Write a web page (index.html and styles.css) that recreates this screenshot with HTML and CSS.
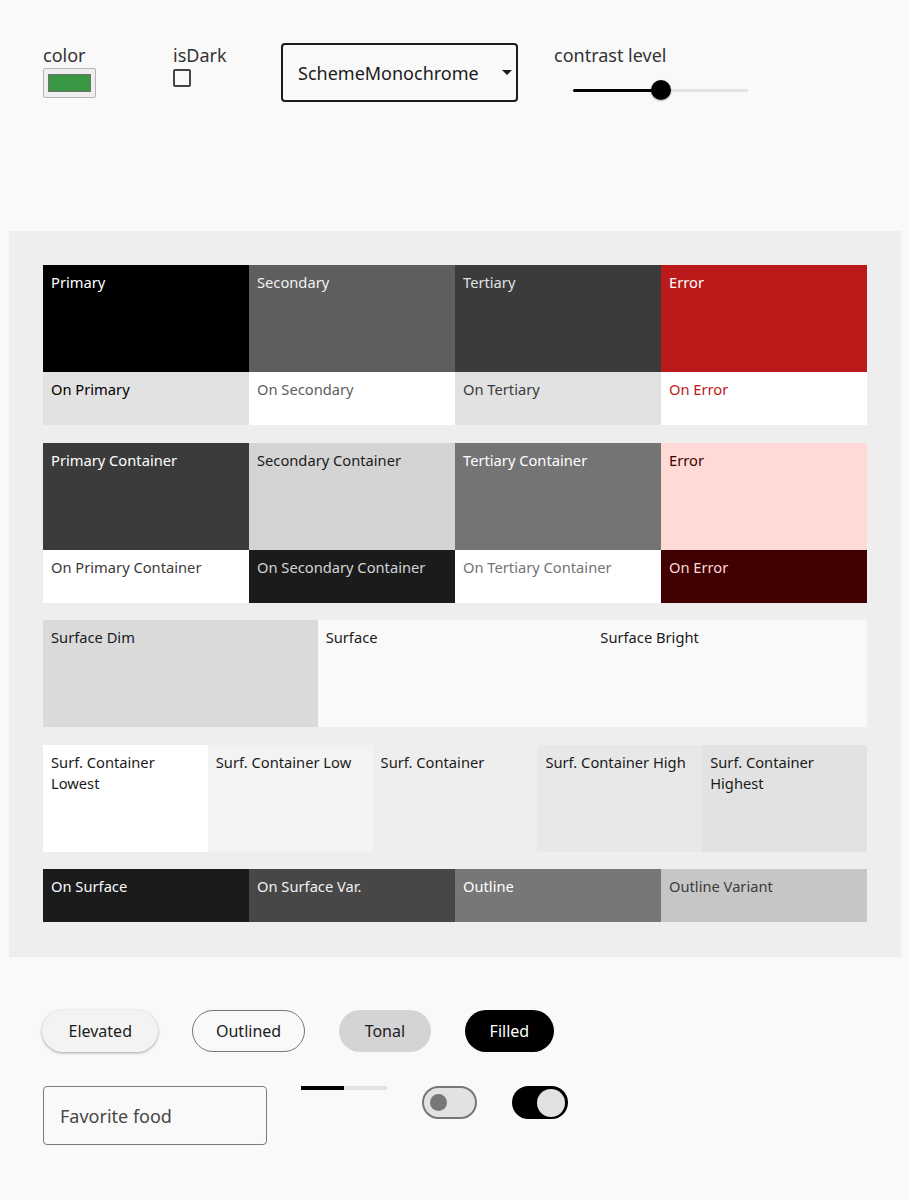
FILE: index.html
```html
<!DOCTYPE html>
<html lang="en">
<head>
    <meta charset="UTF-8">
    <meta name="viewport" content="width=device-width, initial-scale=1.0">
    <title>Scheme Preview</title>
    <link rel="stylesheet" href="styles.css">
</head>
<body>
    <header class="controls">
        <div class="field field-color">
            <label>color</label>
            <span class="color-input"><span class="color-fill"></span></span>
        </div>
        <div class="field field-dark">
            <label for="is-dark">isDark</label>
            <input type="checkbox" id="is-dark" class="check">
        </div>
        <div class="select-wrap">
            <select class="scheme-select">
                <option>SchemeMonochrome</option>
                <option>SchemeTonalSpot</option>
                <option>SchemeVibrant</option>
            </select>
        </div>
        <div class="field field-contrast">
            <label>contrast level</label>
            <div class="range">
                <div class="range-fill" style="width: 50%"></div>
                <span class="range-thumb" style="left: 50%"></span>
            </div>
        </div>
    </header>

    <main class="scheme-panel">
        <div class="group group-4">
            <div class="cell bg-primary">Primary</div>
            <div class="cell bg-secondary">Secondary</div>
            <div class="cell bg-tertiary">Tertiary</div>
            <div class="cell bg-error">Error</div>
            <div class="cell bg-on-primary">On Primary</div>
            <div class="cell bg-on-secondary">On Secondary</div>
            <div class="cell bg-on-tertiary">On Tertiary</div>
            <div class="cell bg-on-error">On Error</div>
        </div>

        <div class="group group-4">
            <div class="cell bg-primary-container">Primary Container</div>
            <div class="cell bg-secondary-container">Secondary Container</div>
            <div class="cell bg-tertiary-container">Tertiary Container</div>
            <div class="cell bg-error-container">Error</div>
            <div class="cell bg-on-primary-container">On Primary Container</div>
            <div class="cell bg-on-secondary-container">On Secondary Container</div>
            <div class="cell bg-on-tertiary-container">On Tertiary Container</div>
            <div class="cell bg-on-error-container">On Error</div>
        </div>

        <div class="group group-3">
            <div class="cell bg-surface-dim">Surface Dim</div>
            <div class="cell bg-surface">Surface</div>
            <div class="cell bg-surface-bright">Surface Bright</div>
        </div>

        <div class="group group-5">
            <div class="cell bg-sc-lowest">Surf. Container Lowest</div>
            <div class="cell bg-sc-low">Surf. Container Low</div>
            <div class="cell bg-sc">Surf. Container</div>
            <div class="cell bg-sc-high">Surf. Container High</div>
            <div class="cell bg-sc-highest">Surf. Container Highest</div>
        </div>

        <div class="group group-short">
            <div class="cell bg-on-surface">On Surface</div>
            <div class="cell bg-on-surface-var">On Surface Var.</div>
            <div class="cell bg-outline">Outline</div>
            <div class="cell bg-outline-variant">Outline Variant</div>
        </div>
    </main>

    <section class="components">
        <div class="button-row">
            <button class="btn btn-elevated">Elevated</button>
            <button class="btn btn-outlined">Outlined</button>
            <button class="btn btn-tonal">Tonal</button>
            <button class="btn btn-filled">Filled</button>
        </div>
        <div class="input-row">
            <input type="text" class="text-field" placeholder="Favorite food">
            <div class="progress"><div class="progress-bar" style="width: 50%"></div></div>
            <span class="switch"><span class="knob"></span></span>
            <span class="switch switch-on"><span class="knob"></span></span>
        </div>
    </section>
</body>
</html>
```

FILE: styles.css
```css
body {
    background-color: #f9f9f9;
    font-family: 'Noto Sans', sans-serif;
    color: #1b1b1b;
    margin: 0;
}

/* top controls */
.controls {
    height: 231px;
    box-sizing: border-box;
    padding: 43px 0 0 43px;
    display: flex;
    align-items: flex-start;
}
.field {
    display: flex;
    flex-direction: column;
    align-items: flex-start;
}
.field label {
    font-size: 18px;
    line-height: 24px;
    color: #333333;
}
.field-color {
    width: 130px;
}
.field-dark {
    width: 108px;
}
.color-input {
    margin-top: 1px;
    width: 53px;
    height: 30px;
    box-sizing: border-box;
    border: 1px solid #b5b5b5;
    border-radius: 2px;
    background-color: #efefef;
    padding: 5px 4px;
    display: flex;
}
.color-fill {
    flex-grow: 1;
    background-color: #3a9845;
    border: 1px solid #6f6f6f;
}
.check {
    appearance: none;
    margin: 2px 0 0 0;
    width: 18px;
    height: 18px;
    border: 2px solid #444444;
    border-radius: 2px;
    background: transparent;
}
.select-wrap {
    position: relative;
    margin-right: 36px;
}
.select-wrap::after {
    content: '';
    position: absolute;
    right: 6px;
    top: 27px;
    border-left: 5px solid transparent;
    border-right: 5px solid transparent;
    border-top: 5px solid #1b1b1b;
}
.scheme-select {
    appearance: none;
    width: 237px;
    height: 59px;
    border: 2px solid #1b1b1b;
    border-radius: 4px;
    background-color: #f9f9f9;
    padding: 0 0 0 15px;
    font-family: 'Noto Sans', sans-serif;
    font-size: 18px;
    color: #1b1b1b;
}
.range {
    position: relative;
    margin: 22px 0 0 19px;
    width: 175px;
    height: 3px;
    background-color: #e2e2e2;
    border-radius: 2px;
}
.range-fill {
    height: 100%;
    background-color: #000000;
    border-radius: 2px;
}
.range-thumb {
    position: absolute;
    top: -9px;
    width: 20px;
    height: 20px;
    margin-left: -10px;
    border-radius: 50%;
    background-color: #000000;
    box-shadow: 0 1px 2px rgba(0, 0, 0, 0.3);
}

/* colour scheme panel */
.scheme-panel {
    margin: 0 8px 0 9px;
    padding: 34px 34px 35px;
    background-color: #eeeeee;
    display: flex;
    flex-direction: column;
    gap: 17.5px;
}
.group {
    display: grid;
}
.group-4 {
    grid-template-columns: repeat(4, 1fr);
    grid-template-rows: 107px 53px;
}
.group-3 {
    grid-template-columns: repeat(3, 1fr);
    grid-template-rows: 107px;
}
.group-5 {
    grid-template-columns: repeat(5, 1fr);
    grid-template-rows: 107px;
}
.group-short {
    grid-template-columns: repeat(4, 1fr);
    grid-template-rows: 53px;
}
.cell {
    padding: 7px 8px;
    font-size: 14.7px;
    line-height: 21px;
}

.bg-primary { background-color: #000000; color: #ffffff; }
.bg-secondary { background-color: #5e5e5e; color: #f2f2f2; }
.bg-tertiary { background-color: #3b3b3b; color: #e2e2e2; }
.bg-error { background-color: #ba1a1a; color: #ffffff; }
.bg-on-primary { background-color: #e2e2e2; color: #000000; }
.bg-on-secondary { background-color: #ffffff; color: #5e5e5e; }
.bg-on-tertiary { background-color: #e2e2e2; color: #3b3b3b; }
.bg-on-error { background-color: #ffffff; color: #ba1a1a; }

.bg-primary-container { background-color: #3b3b3b; color: #ffffff; }
.bg-secondary-container { background-color: #d4d4d4; color: #1b1b1b; }
.bg-tertiary-container { background-color: #747474; color: #ffffff; }
.bg-error-container { background-color: #ffdad6; color: #410002; }
.bg-on-primary-container { background-color: #ffffff; color: #3b3b3b; }
.bg-on-secondary-container { background-color: #1b1b1b; color: #d4d4d4; }
.bg-on-tertiary-container { background-color: #ffffff; color: #747474; }
.bg-on-error-container { background-color: #410002; color: #ffdad6; }

.bg-surface-dim { background-color: #dadada; }
.bg-surface { background-color: #f9f9f9; }
.bg-surface-bright { background-color: #f9f9f9; }

.bg-sc-lowest { background-color: #ffffff; }
.bg-sc-low { background-color: #f3f3f3; }
.bg-sc { background-color: #eeeeee; }
.bg-sc-high { background-color: #e8e8e8; }
.bg-sc-highest { background-color: #e2e2e2; }

.bg-on-surface { background-color: #1b1b1b; color: #f9f9f9; }
.bg-on-surface-var { background-color: #474747; color: #f2f2f2; }
.bg-outline { background-color: #777777; color: #ffffff; }
.bg-outline-variant { background-color: #c6c6c6; color: #3b3b3b; }

/* components */
.components {
    padding: 53px 43px 40px 42px;
    display: flex;
    flex-direction: column;
    gap: 34px;
}
.button-row {
    display: flex;
    gap: 33.5px;
}
.btn {
    height: 42px;
    padding: 0 26px;
    border-radius: 21px;
    border: none;
    font-family: 'Noto Sans', sans-serif;
    font-size: 16px;
    color: #1b1b1b;
    cursor: pointer;
}
.btn-elevated {
    padding: 0 26.5px;
    background-color: #f3f3f3;
    box-shadow: 0 1px 3px rgba(0, 0, 0, 0.35);
}
.btn-outlined {
    padding: 0 23px;
    background-color: transparent;
    border: 1px solid #777777;
}
.btn-tonal {
    background-color: #d4d4d4;
}
.btn-filled {
    padding: 0 25px;
    background-color: #000000;
    color: #ffffff;
}
.input-row {
    display: flex;
    align-items: flex-start;
    gap: 34px;
    padding-left: 1px;
}
.text-field {
    width: 224px;
    height: 59px;
    box-sizing: border-box;
    margin: 0;
    padding: 0 16px;
    border: 1px solid #7a7a7a;
    border-radius: 4px;
    background-color: transparent;
    font-family: 'Noto Sans', sans-serif;
    font-size: 18px;
}
.text-field::placeholder {
    color: #474747;
}
.progress {
    width: 86px;
    height: 4px;
    background-color: #e2e2e2;
}
.progress-bar {
    height: 100%;
    background-color: #000000;
}
.switch {
    width: 55px;
    height: 33px;
    box-sizing: border-box;
    margin-left: 1px;
    border: 2px solid #777777;
    border-radius: 17px;
    background-color: #e2e2e2;
    padding: 0 6px;
    display: flex;
    align-items: center;
}
.switch .knob {
    width: 17px;
    height: 17px;
    border-radius: 50%;
    background-color: #777777;
}
.switch-on {
    width: 56px;
    border-color: #000000;
    background-color: #000000;
    padding: 0 1px;
    justify-content: flex-end;
}
.switch-on .knob {
    width: 28px;
    height: 28px;
    background-color: #e2e2e2;
}
```
